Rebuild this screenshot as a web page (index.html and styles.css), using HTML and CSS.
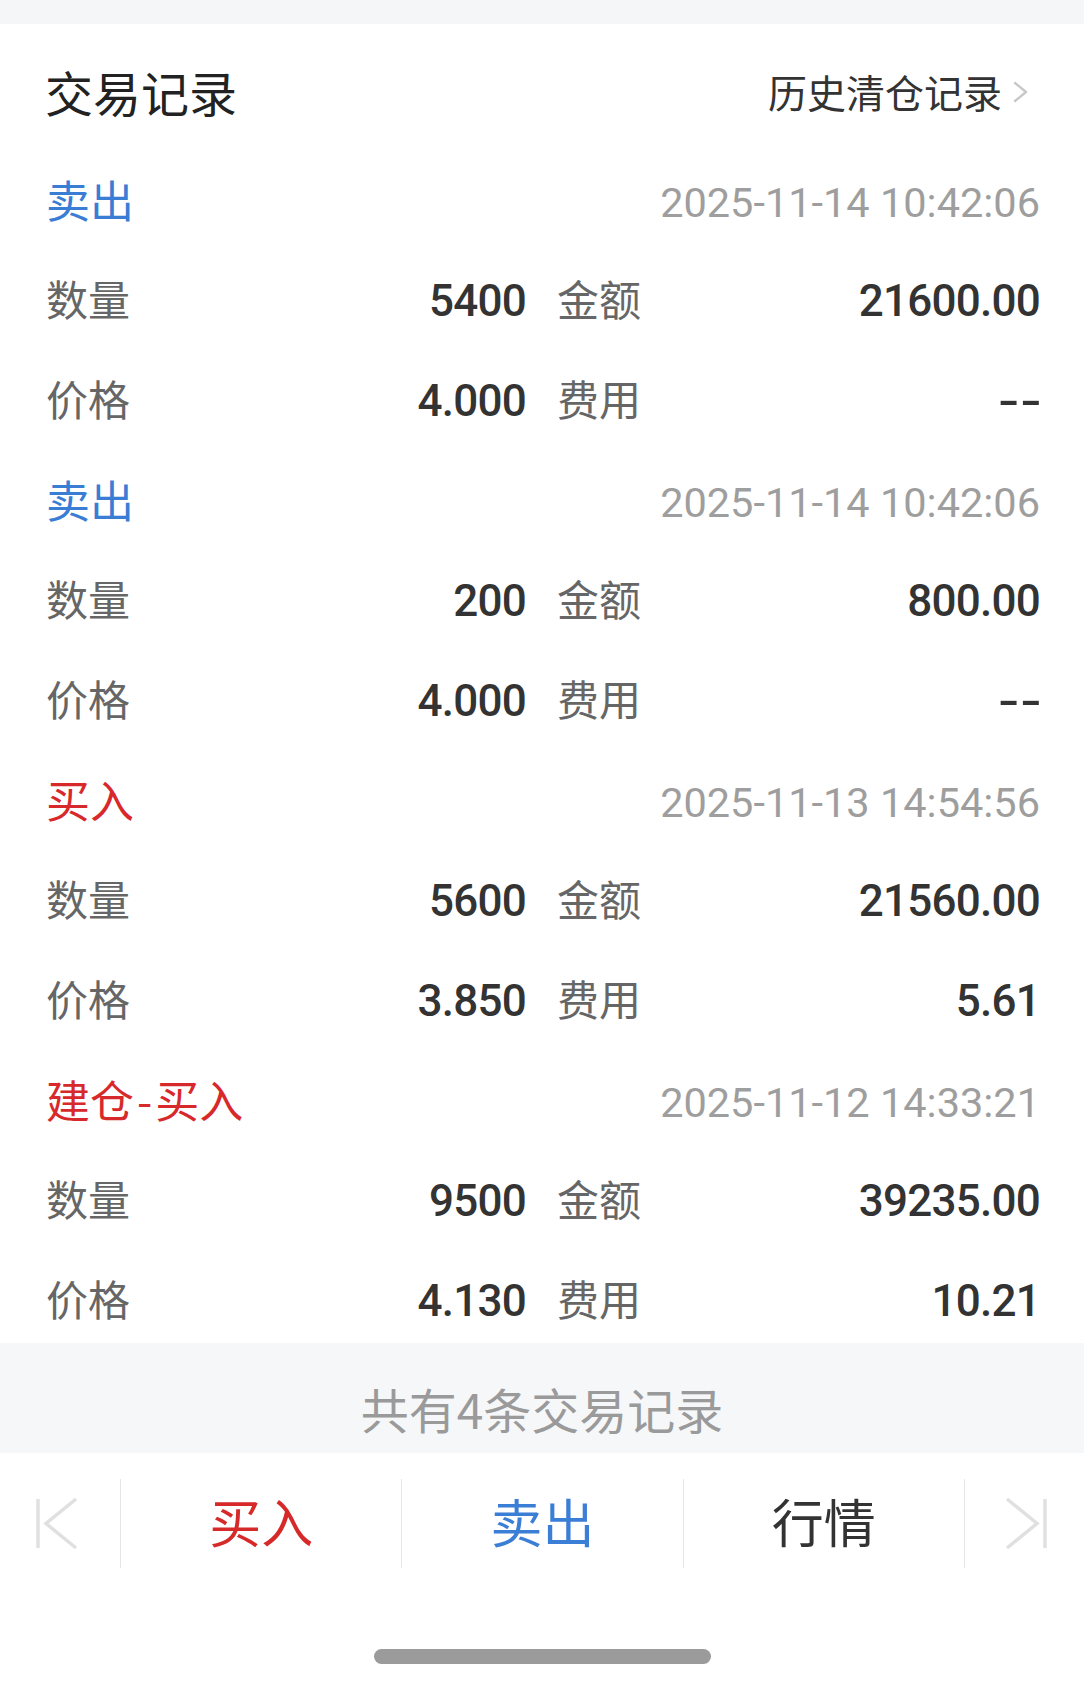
FILE: index.html
```html
<!DOCTYPE html>
<html lang="zh-CN">
<head>
<meta charset="utf-8">
<title>交易记录</title>
<link rel="stylesheet" href="styles.css">
</head>
<body>
<div class="page">
  <div class="topband"></div>
  <div class="header">
    <div class="title">交易记录</div>
    <div class="link">
      <span>历史清仓记录</span>
      <svg class="chev" width="15" height="22" viewBox="0 0 15 22"><polyline points="2,2 13,11 2,20" fill="none" stroke="#c8c8c8" stroke-width="2.4" stroke-linecap="round" stroke-linejoin="round"/></svg>
    </div>
  </div>

  <div class="record">
    <div class="rec-head"><span class="type sell">卖出</span><span class="date">2025-11-14 10:42:06</span></div>
    <div class="row">
      <div class="cell"><span class="label">数量</span><span class="value">5400</span></div>
      <div class="cell"><span class="label">金额</span><span class="value">21600.00</span></div>
    </div>
    <div class="row">
      <div class="cell"><span class="label">价格</span><span class="value">4.000</span></div>
      <div class="cell"><span class="label">费用</span><span class="value"><span class="dash">--</span></span></div>
    </div>
  </div>

  <div class="record">
    <div class="rec-head"><span class="type sell">卖出</span><span class="date">2025-11-14 10:42:06</span></div>
    <div class="row">
      <div class="cell"><span class="label">数量</span><span class="value">200</span></div>
      <div class="cell"><span class="label">金额</span><span class="value">800.00</span></div>
    </div>
    <div class="row">
      <div class="cell"><span class="label">价格</span><span class="value">4.000</span></div>
      <div class="cell"><span class="label">费用</span><span class="value"><span class="dash">--</span></span></div>
    </div>
  </div>

  <div class="record">
    <div class="rec-head"><span class="type buy">买入</span><span class="date">2025-11-13 14:54:56</span></div>
    <div class="row">
      <div class="cell"><span class="label">数量</span><span class="value">5600</span></div>
      <div class="cell"><span class="label">金额</span><span class="value">21560.00</span></div>
    </div>
    <div class="row">
      <div class="cell"><span class="label">价格</span><span class="value">3.850</span></div>
      <div class="cell"><span class="label">费用</span><span class="value">5.61</span></div>
    </div>
  </div>

  <div class="record">
    <div class="rec-head"><span class="type buy">建仓<span class="hy">-</span>买入</span><span class="date">2025-11-12 14:33:21</span></div>
    <div class="row">
      <div class="cell"><span class="label">数量</span><span class="value">9500</span></div>
      <div class="cell"><span class="label">金额</span><span class="value">39235.00</span></div>
    </div>
    <div class="row">
      <div class="cell"><span class="label">价格</span><span class="value">4.130</span></div>
      <div class="cell"><span class="label">费用</span><span class="value">10.21</span></div>
    </div>
  </div>

  <div class="summary">共有4条交易记录</div>

  <div class="bottom">
    <div class="nav">
      <div class="nav-icon">
        <svg width="120" height="89" viewBox="0 0 120 89"><line x1="38" y1="20" x2="38" y2="69" stroke="#e0e0e0" stroke-width="3.5"/><polyline points="76,20 46,44.5 76,69" fill="none" stroke="#e0e0e0" stroke-width="3.5"/></svg>
      </div>
      <div class="nav-item buy">买入</div>
      <div class="nav-item sell">卖出</div>
      <div class="nav-item quote">行情</div>
      <div class="nav-icon">
        <svg width="120" height="89" viewBox="0 0 120 89"><polyline points="42,20 72,44.5 42,69" fill="none" stroke="#e0e0e0" stroke-width="3.5"/><line x1="80" y1="20" x2="80" y2="69" stroke="#e0e0e0" stroke-width="3.5"/></svg>
      </div>
    </div>
    <div class="home-bar"></div>
  </div>
</div>
</body>
</html>
```

FILE: styles.css
```css
* { box-sizing: border-box; }
html, body { margin: 0; padding: 0; background: #ffffff; }
.page {
  width: 1084px;
  height: 1683px;
  overflow: hidden;
  font-family: "Noto Sans CJK SC", "Noto Sans", sans-serif;
  background: #ffffff;
}
.topband { height: 24px; background: #f5f6f8; }

.header {
  height: 119px;
  padding: 16px 56px 0 45px;
  display: flex;
  align-items: center;
  justify-content: space-between;
}
.title { font-size: 48px; color: #222222; line-height: 1.2; }
.link { display: flex; align-items: center; font-size: 39px; color: #333333; line-height: 1.2; }
.chev { margin-left: 11px; margin-top: 2px; }

.rec-head {
  height: 100px;
  padding: 13px 44px 0 46px;
  display: flex;
  align-items: center;
  justify-content: space-between;
}
.type { font-size: 44px; line-height: 1.2; }
.type .hy { margin: 0 3px; }
.type.sell { color: #3a7dd4; }
.type.buy { color: #d7292b; }
.date {
  font-family: "Roboto", "Liberation Sans", sans-serif;
  font-size: 41.5px;
  color: #9e9e9e;
  line-height: 1.2;
  padding-top: 6px;
}

.row {
  height: 100px;
  padding: 11px 44px 0 46px;
  display: grid;
  grid-template-columns: 480px 1fr;
  column-gap: 31px;
}
.cell { display: flex; align-items: center; justify-content: space-between; }
.label { font-size: 42px; color: #666666; line-height: 1.2; }
.value {
  font-family: "Roboto", "Liberation Sans", sans-serif;
  font-weight: 500;
  font-size: 44px;
  letter-spacing: -0.75px;
  color: #333333;
  line-height: 1.2;
  padding-top: 6px;
}
.dash {
  display: inline-block;
  letter-spacing: 1px;
  transform: scaleX(1.4);
  transform-origin: right center;
  margin-right: -3px;
}

.summary {
  height: 110px;
  padding-top: 22px;
  background: #f6f7f9;
  display: flex;
  align-items: center;
  justify-content: center;
  font-size: 48px;
  color: #9a9a9a;
  line-height: 1.2;
}

.bottom { padding-top: 26px; }
.nav { display: flex; height: 89px; }
.nav-icon { width: 120px; flex: none; }
.nav-icon + .nav-item, .nav-item + .nav-item, .nav-item + .nav-icon { border-left: 1px solid #e6e6e6; }
.nav-item {
  flex: 1;
  display: flex;
  align-items: center;
  justify-content: center;
  padding-bottom: 4px;
  font-size: 52px;
  line-height: 1.2;
}
.nav-item.buy { color: #d62a2a; }
.nav-item.sell { color: #3b7ed6; }
.nav-item.quote { color: #333333; }
.home-bar {
  width: 337px;
  height: 15px;
  margin: 81px auto 0;
  border-radius: 8px;
  background: #9b9b9b;
}
```
